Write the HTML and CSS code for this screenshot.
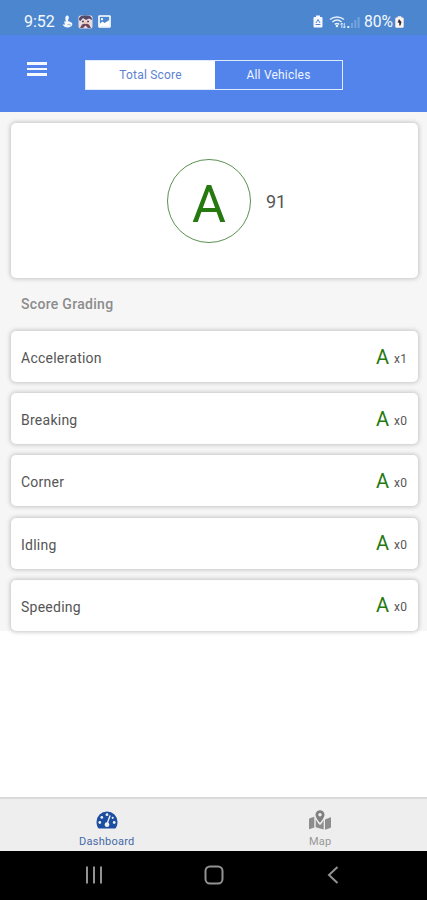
FILE: index.html
```html
<!DOCTYPE html>
<html lang="en">
  <head>
    <meta charset="UTF-8" />
    <meta name="viewport" content="width=device-width, initial-scale=1.0" />
    <title>Dashboard</title>
    <link rel="stylesheet" href="styles.css">
  </head>
  <body>
    <div class="status-bar">
      <div class="status-left">
        <span class="time">9:52</span>
        <svg width="11" height="14" viewBox="0 0 11 14">
          <path d="M5 0.5C7 0.5 7.4 2.5 6.4 4.2L6 6L9.5 7.5C11 8.5 10.5 10.5 9 11.5C6 13.5 2 12.5 0.5 9.5L3 9.5L2 6.5L4 6.5C3 4 3 1 5 0.5Z" fill="#f3f8ff" />
          <path d="M5.5 9.5L9 10" stroke="#8db3df" />
        </svg>
        <svg width="15" height="14" viewBox="0 0 15 14">
          <rect x="0.5" y="0.5" width="14" height="13" rx="2" fill="#e8dcdf" />
          <path d="M1 5C1 1 4 0.5 7.5 0.5S14 1 14 5L11 3.5L8 5L5 3L2.5 6Z" fill="#55496a" />
          <path d="M4 6.5H6M9 6.5H11" stroke="#4c3949" stroke-width="1.3" />
          <path d="M2 13L4 9.5L7.5 8L11 9.5L13 13H10L7.5 10.5L5 13Z" fill="#71465a" />
          <path d="M5.5 6.5H9.5L8.5 9H6.5Z" fill="#f5c8ae" />
        </svg>
        <svg width="13" height="13" viewBox="0 0 13 13">
          <rect x="1" y="1" width="11" height="11" rx="0.5" fill="none" stroke="#fff" stroke-width="1.6" />
          <path d="M1.5 11.5V9L4.5 6.5L6.5 8L11.5 5V11.5Z" fill="#fff" />
          <circle cx="4" cy="4.2" r="1.1" fill="#fff" />
        </svg>
      </div>
      <div class="status-right">
        <svg width="10" height="13" viewBox="0 0 10 13">
          <path d="M3 0.5H7V2H8.5Q9.5 2 9.5 3V11.5Q9.5 12.5 8.5 12.5H1.5Q0.5 12.5 0.5 11.5V3Q0.5 2 1.5 2H3Z" fill="#f5f9ff" />
          <path d="M3 8L5 4.5L7 8M2.6 9.5H7.4" fill="none" stroke="#5487ca" />
        </svg>
        <svg class="wifi" width="17" height="14" viewBox="0 0 17 14">
          <path d="M1 4.5C5 1 11 1 15 4.5M3.4 7C6.2 4.6 9.8 4.6 12.6 7M5.8 9.4C7.2 8.2 8.8 8.2 10.2 9.4" fill="none" stroke="#e5effa" stroke-width="1.5" />
          <circle cx="8" cy="11" r="1.3" fill="#e5effa" />
          <path d="M12.8 8V13M11.5 9.5L12.8 8L14 9.5M15.3 8V13M14 11.5L15.3 13L16.5 11.5" fill="none" stroke="#e5effa" stroke-width="0.9" />
        </svg>
        <svg class="signal" width="13" height="12" viewBox="0 0 13 12">
          <path d="M1.3 10V12" stroke="#e5effa" stroke-width="2" />
          <path d="M5 7V12M8.3 4V12M11.6 1V12" stroke="#76a3df" stroke-width="2" />
        </svg>
        <span class="percent">80%</span>
        <svg width="9" height="12" viewBox="0 0 9 12">
          <path d="M2.7 0.3H6.3V1.5H7.5Q8.7 1.5 8.7 2.7V10.5Q8.7 11.7 7.5 11.7H1.5Q0.3 11.7 0.3 10.5V2.7Q0.3 1.5 1.5 1.5H2.7Z" fill="#fff5eb" />
          <path d="M4 3L6.5 6L5.5 9.5H4.2V7L2.6 6.3Z" fill="#303443" />
        </svg>
      </div>
    </div>

    <div class="header">
      <div class="menu">
        <span></span>
        <span></span>
        <span></span>
      </div>
      <div class="segment">
        <div class="segment-item active">Total Score</div>
        <div class="segment-item">All Vehicles</div>
      </div>
    </div>

    <div class="content">
      <div class="scores">
        <div class="card total">
          <div class="grade-circle">A</div>
          <div class="points">91</div>
        </div>
        <div class="title">Score Grading</div>
        <div class="card row">
          <span>Acceleration</span>
          <span class="grade">A</span>
          <span class="count">x1</span>
        </div>
        <div class="card row">
          <span>Breaking</span>
          <span class="grade">A</span>
          <span class="count">x0</span>
        </div>
        <div class="card row">
          <span>Corner</span>
          <span class="grade">A</span>
          <span class="count">x0</span>
        </div>
        <div class="card row">
          <span>Idling</span>
          <span class="grade">A</span>
          <span class="count">x0</span>
        </div>
        <div class="card row">
          <span>Speeding</span>
          <span class="grade">A</span>
          <span class="count">x0</span>
        </div>
      </div>
    </div>

    <div class="tabs">
      <div class="tab selected">
        <svg width="22" height="18" viewBox="0 0 22 18">
          <path d="M11 0.5A10.5 10.5 0 0 0 0.5 11C0.5 13.2 1.1 15.2 2 16.8Q2.4 17.5 3.2 17.5H18.8Q19.6 17.5 20 16.8C20.9 15.2 21.5 13.2 21.5 11A10.5 10.5 0 0 0 11 0.5Z" fill="#1c4da1" />
          <circle cx="3.8" cy="11.5" r="1.4" fill="#eee" />
          <circle cx="5.8" cy="6.4" r="1.4" fill="#eee" />
          <circle cx="11" cy="3.7" r="1.4" fill="#eee" />
          <circle cx="18.2" cy="11.5" r="1.4" fill="#eee" />
          <circle cx="16.7" cy="6.8" r="1.1" fill="#eee" />
          <path d="M13.9 5L11.2 12.5" stroke="#eee" stroke-width="1.4" stroke-linecap="round" />
          <circle cx="11" cy="13.7" r="2.4" fill="#eee" />
        </svg>
        <span>Dashboard</span>
      </div>
      <div class="tab">
        <svg width="22" height="20" viewBox="0 0 22 20">
          <path d="M0 9.3Q0 8.6 0.7 8.3L5.3 6.7V17.4L0.9 19.1Q0 19.4 0 18.5ZM6.7 9C7.6 11 9 13 10.2 14.4Q11 15.2 11.8 14.4C13 13 14 11.5 14.7 10V19.5L6.7 17.2ZM16 9.5L21 7.4Q22 7 22 8V17Q22 17.7 21.3 18L16 19.8Z" fill="#8d8d8d" />
          <path fill-rule="evenodd" d="M11 0.2A4.5 4.5 0 0 0 6.5 4.7C6.5 7.2 9.3 10.8 10.5 12.2Q11 12.8 11.5 12.2C12.7 10.8 15.5 7.2 15.5 4.7A4.5 4.5 0 0 0 11 0.2ZM11 3A1.7 1.7 0 1 1 11 6.4A1.7 1.7 0 1 1 11 3Z" fill="#808080" />
        </svg>
        <span>Map</span>
      </div>
    </div>

    <div class="nav-bar">
      <svg width="18" height="18" viewBox="0 0 18 18">
        <path d="M2 0.5V17.5M9 0.5V17.5M16 0.5V17.5" stroke="#929292" stroke-width="2" />
      </svg>
      <svg width="20" height="20" viewBox="0 0 20 20">
        <rect x="1.5" y="1.5" width="17" height="17" rx="4.5" fill="none" stroke="#929292" stroke-width="2" />
      </svg>
      <svg width="18" height="18" viewBox="0 0 18 18">
        <path d="M13.5 1L5 9L13.5 17" fill="none" stroke="#929292" stroke-width="2" />
      </svg>
    </div>
  </body>
</html>
```
FILE: styles.css
```css
* {
  box-sizing: border-box;
}
body {
  margin: 0;
  height: 900px;
  display: flex;
  flex-direction: column;
  font-family: Roboto, "Liberation Sans", sans-serif;
  font-size: 14px;
  color: #555;
  background: white;
  overflow: hidden;
}
svg {
  display: block;
  flex-shrink: 0;
}

/* top of the phone */
.status-bar {
  height: 35px;
  padding: 8px 23px 0 24px;
  display: flex;
  justify-content: space-between;
  align-items: flex-start;
  background: #4b86cf;
  color: #f5f9ff;
  font-size: 16px;
  line-height: 27px;
}
.status-left,
.status-right {
  display: flex;
  align-items: center;
  height: 27px;
}
.time {
  width: 38px;
}
.status-left svg {
  margin-right: 5px;
}
.wifi {
  margin-left: 6px;
}
.signal {
  margin-left: 1px;
}
.percent {
  margin: 0 2px 0 4px;
  font-size: 15.7px;
}

.header {
  height: 77px;
  display: flex;
  align-items: flex-start;
  padding: 25px 0 0 27px;
  background: #5284ec;
}
.menu {
  width: 20px;
  margin-top: 2px;
  display: flex;
  flex-direction: column;
  gap: 3px;
}
.menu span {
  height: 2.5px;
  background: #f4f8ff;
}
.segment {
  display: flex;
  width: 258px;
  height: 30px;
  margin-left: 38px;
  border: 1px solid #e0eaff;
}
.segment-item {
  flex: 1;
  text-align: center;
  font-size: 12px;
  line-height: 28px;
  letter-spacing: 0.2px;
  color: #f0f5ff;
}
.segment .active {
  flex: 0 0 129px;
  background: white;
  color: #5d83d2;
}

.content {
  flex: 1;
}
.scores {
  background: #f6f6f6;
  padding: 11px 9px 0 11px;
  height: 519px;
}
.card {
  background: white;
  border-radius: 5px;
  box-shadow: 0 0 4px 1px #c4c4c4;
}
.total {
  height: 155px;
  display: flex;
  align-items: center;
  padding-left: 156px;
}
.grade-circle {
  width: 84px;
  height: 84px;
  border: 1px solid #5b9150;
  border-radius: 50%;
  text-align: center;
  font-size: 52px;
  line-height: 89px;
  color: #25790f;
}
.points {
  margin: 2px 0 0 15px;
  font-size: 18px;
}
.title {
  padding-left: 10px;
  height: 53px;
  line-height: 52px;
  font-weight: 500;
  letter-spacing: 0.3px;
  color: #8c8c8c;
}
.row {
  display: flex;
  align-items: center;
  height: 51px;
  margin-bottom: 11.2px;
  padding: 3px 10px 0;
  letter-spacing: 0.25px;
}
.grade {
  margin-left: auto;
  margin-top: -3px;
  font-size: 20px;
  letter-spacing: 0;
  color: #25790f;
}
.count {
  width: 14px;
  margin-left: 5px;
  margin-top: 1px;
  font-size: 12px;
}

.tabs {
  display: flex;
  height: 54px;
  background: #eee;
  border-top: 2px solid #dadada;
}
.tab {
  flex: 1;
  display: flex;
  flex-direction: column;
  align-items: center;
  justify-content: flex-end;
  font-size: 11px;
  line-height: 13px;
  letter-spacing: 0.25px;
  color: #979797;
  padding-bottom: 3px;
}
.tab span {
  margin-top: 5px;
}
.selected {
  color: #4569a8;
}
.selected span {
  margin-top: 6px;
}
.nav-bar {
  height: 49px;
  display: flex;
  align-items: center;
  justify-content: space-between;
  padding: 0 85px 2px 85px;
  background: black;
}
```
